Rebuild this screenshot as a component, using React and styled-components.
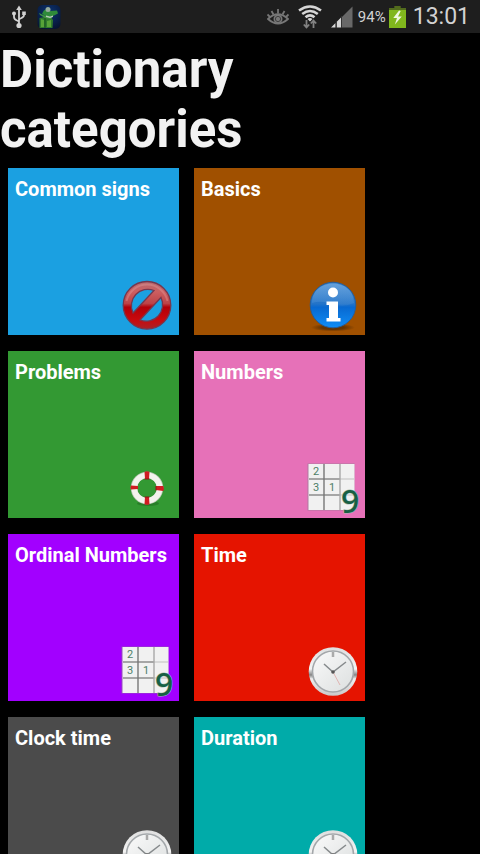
import React, { useId } from "react";
import styled, { createGlobalStyle } from "styled-components";

const categories = [
  { name: "Common signs", color: "#1ba0e1", icon: ForbiddenIcon },
  { name: "Basics", color: "#a05000", icon: InfoIcon },
  { name: "Problems", color: "#339933", icon: LifebuoyIcon },
  { name: "Numbers", color: "#e671b8", icon: NumbersIcon },
  { name: "Ordinal Numbers", color: "#a200ff", icon: NumbersIcon },
  { name: "Time", color: "#e51400", icon: ClockIcon },
  { name: "Clock time", color: "#4b4b4b", icon: ClockIcon },
  { name: "Duration", color: "#00aba9", icon: ClockIcon },
];

function App() {
  return (
    <Screen>
      <GlobalStyle />
      <StatusBar>
        <UsbIcon />
        <AppIcon />
        <Spacer />
        <EyeIcon />
        <WifiIcon />
        <SignalIcon />
        <Percent>94%</Percent>
        <BatteryIcon />
        <Clock>13:01</Clock>
      </StatusBar>
      <Main>
        <Heading>Dictionary categories</Heading>
        <Grid>
          {categories.map(({ name, color, icon: Icon }) => (
            <Tile key={name} type="button" $color={color}>
              <TileName>{name}</TileName>
              <TileIcon>
                <Icon />
              </TileIcon>
            </Tile>
          ))}
        </Grid>
      </Main>
    </Screen>
  );
}

export default App;

function UsbIcon() {
  return (
    <svg width="18" height="24" viewBox="-1 0 18 24" aria-hidden="true">
      <g fill="none" stroke="#d2d2d2" strokeWidth="1.8">
        <path d="M8 4v16M8 17.5C8 15 3 16 3 12V9M8 15c0-2 5-1.500 5-5V8" />
      </g>
      <g fill="#d2d2d2">
        <path d="M8 .5l2.800 4.500H5.200z" />
        <circle cx="3" cy="8.500" r="2" />
        <path d="M11.200 6.500h3.600v3.600h-3.600z" />
        <circle cx="8" cy="20.500" r="2.600" />
      </g>
    </svg>
  );
}

function AppIcon() {
  return (
    <svg width="24" height="26" viewBox="0 0 24 26" aria-hidden="true">
      <defs>
        <radialGradient id="app-bg" cx="50%" cy="30%" r="75%">
          <stop offset="0" stopColor="#0c3474" />
          <stop offset="1" stopColor="#071431" />
        </radialGradient>
      </defs>
      <rect x=".5" y="1" width="23" height="24" rx="5" fill="url(#app-bg)" />
      <path d="M6 8Q7 5 10 6l3 1 7-.5 1 3-5 2.500H9L5 10z" fill="#2f8a3a" />
      <path d="M2.500 14l5-1 7 1 1.500 2-.5 8h-13z" fill="#2f7a2d" />
      <path d="M2 9l4 2 4 1 5 1-1 2-6-1-5-3z" fill="#3f9440" />
      <path d="M8 14v10" fill="none" stroke="#194f20" />
      <path d="M4 15l3 1v7H4zM10 17l4-1v7h-4z" fill="#57a238" />
      <circle cx="11" cy="5.500" r="2.500" fill="#95ab9c" />
      <path d="M9 11.500l4 1 3-1v1.500l-3 1-4-1z" fill="#b4ccb3" />
    </svg>
  );
}

function EyeIcon() {
  return (
    <svg width="22" height="18" viewBox="0 0 22 18" aria-hidden="true">
      <g fill="none" stroke="#777" strokeWidth="1.800">
        <path d="M1 11Q11 1.500 21 11Q11 20 1 11z" />
        <circle cx="11" cy="11" r="3.600" />
        <path d="M11 5.500V1M6.500 6.500L4.500 3M15.500 6.500l2-3.500M3 9L.5 6.500M19 9l2.500-2.500" />
      </g>
      <circle cx="11" cy="11" r="2.200" fill="#777" />
    </svg>
  );
}

function WifiIcon() {
  return (
    <svg width="24" height="24" viewBox="0 0 24 24" aria-hidden="true">
      <g fill="none" stroke="#d6d6d6" strokeWidth="2.600">
        <path d="M1 5.500Q12-2.500 23 5.500" />
        <path d="M4.200 9Q12 3 19.800 9" />
        <path d="M7.500 12.300Q12 8.500 16.500 12.300" />
      </g>
      <path d="M9.500 14Q12 12 14.500 14L12 16.500z" fill="#d6d6d6" />
      <g fill="none" stroke="#828282" strokeWidth="1.800">
        <path d="M8.500 15v7M5.800 19.500l2.700 3 2.700-3" />
        <path d="M15.500 23v-7M12.800 18.500l2.700-3 2.700 3" />
      </g>
    </svg>
  );
}

function SignalIcon() {
  return (
    <svg width="22" height="22" viewBox="0 0 22 22" aria-hidden="true">
      <path d="M11 11L21.500.5v21H11z" fill="#686868" />
      <path d="M0 21.500L4.500 17v4.500zM5.500 16l4.500-4.500v10H5.500z" fill="#d6d6d6" />
      <path d="M5.300 15v7M10.500 10v12" stroke="#333" />
    </svg>
  );
}

function BatteryIcon() {
  return (
    <svg width="17" height="22" viewBox="0 0 16 22" preserveAspectRatio="none" aria-hidden="true">
      <path d="M5 0h6v2h5v20H0V2h5z" fill="#526b1d" />
      <path d="M0 4h16v18H0z" fill="#80b71d" />
      <path d="M9.500 4.500L4 12h3.500L5.500 18.500 12 10.500H8.500L11 5z" fill="#eef7df" />
    </svg>
  );
}

function ForbiddenIcon() {
  return (
    <svg viewBox="0 0 52 52" aria-hidden="true">
      <defs>
        <linearGradient id="forbid" x1="0" y1="0" x2="0" y2="1">
          <stop offset="0" stopColor="#b86b70" />
          <stop offset=".22" stopColor="#cc5e60" />
          <stop offset=".46" stopColor="#bd4448" />
          <stop offset=".54" stopColor="#b20009" />
          <stop offset=".8" stopColor="#c9090d" />
          <stop offset="1" stopColor="#a92328" />
        </linearGradient>
      </defs>
      <path
        fill="url(#forbid)"
        fillRule="evenodd"
        stroke="#75384f"
        strokeWidth="1.300"
        d="M25 1.500a23.800 23.800 0 1 0 0 47.600a23.800 23.800 0 1 0 0-47.600zM11 33A16.500 16.500 0 0 1 32 10.500zM39 17.500A16.500 16.500 0 0 1 18 40z"
      />
      <path
        d="M4.500 21A21 21 0 0 1 45.500 21"
        fill="none"
        stroke="#e49b9a"
        strokeOpacity=".4"
        strokeWidth="2"
      />
    </svg>
  );
}

function InfoIcon() {
  return (
    <svg viewBox="0 0 52 52" aria-hidden="true">
      <defs>
        <linearGradient id="info" x1="0" y1="0" x2="0" y2="1">
          <stop offset="0" stopColor="#347fca" />
          <stop offset=".47" stopColor="#2474c8" />
          <stop offset=".55" stopColor="#0869d1" />
          <stop offset="1" stopColor="#108df5" />
        </linearGradient>
        <linearGradient id="info-shine" x1="0" y1="0" x2="0" y2="1">
          <stop offset="0" stopColor="#8dbdeb" stopOpacity=".55" />
          <stop offset="1" stopColor="#8dbdeb" stopOpacity=".1" />
        </linearGradient>
        <radialGradient id="info-shadow">
          <stop offset=".5" stopColor="#4d2700" stopOpacity=".7" />
          <stop offset="1" stopColor="#4d2700" stopOpacity="0" />
        </radialGradient>
      </defs>
      <ellipse cx="25" cy="47.500" rx="22" ry="4" fill="url(#info-shadow)" />
      <circle cx="25" cy="25" r="22.800" fill="url(#info)" stroke="#285e98" />
      <path
        d="M4 23C4-3 46-3 46 23Q35 28 25 24Q14 20 4 23z"
        fill="url(#info-shine)"
      />
      <circle cx="25" cy="12.500" r="5" fill="#fff" />
      <path d="M18.500 21.500H30V38h2.500v3.500H18.500V38H21V25h-2.500z" fill="#fff" />
    </svg>
  );
}

function LifebuoyIcon() {
  return (
    <svg viewBox="0 0 52 52" aria-hidden="true">
      <ellipse cx="26" cy="40.500" rx="11" ry="2.500" fill="#1d651d" opacity=".5" />
      <circle cx="25" cy="25" r="13" fill="none" stroke="#b9c7b3" strokeWidth="6.500" />
      <circle cx="25" cy="25" r="12.700" fill="none" stroke="#f3f3ed" strokeWidth="5.500" />
      <g fill="#d01c22">
        <path d="M22.500 8.800q2.500-1 5 0l-.5 7.200h-4zM22.500 41.300q2.500 1 5 0L27 34h-4z" />
        <path d="M9 22.500q-1 2 0 4l7-.5v-3zM41.300 23q1 2.500 0 5L34 27v-4z" />
      </g>
      <path
        d="M22.500 34h5M22.500 16h5M34 23v4.500"
        stroke="#8b1717"
        strokeWidth="1"
      />
    </svg>
  );
}

function NumbersIcon() {
  return (
    <svg viewBox="0 0 52 52" aria-hidden="true">
      <rect x="-.5" y=".5" width="47" height="47" fill="#8d7f92" opacity=".6" />
      <path d="M.5 1h46v46H.5z" fill="#f1f1f1" />
      <g fill="none" strokeWidth="1.400">
        <path d="M1 16h31M1 32h31" stroke="#8d8d8d" />
        <path d="M32 16h14M32 32h14" stroke="#cfcfcf" />
        <path d="M16 1v46" stroke="#777" />
        <path d="M32 1v46" stroke="#a8a8a8" />
      </g>
      <Digit x="5" y="12">2</Digit>
      <Digit x="5" y="28">3</Digit>
      <Digit x="21" y="28">1</Digit>
      <BigDigit x="33" y="50">9</BigDigit>
    </svg>
  );
}

function ClockIcon() {
  const id = useId();

  return (
    <svg viewBox="0 0 52 52" aria-hidden="true">
      <defs>
        <linearGradient id={`${id}rim`} x1="0" y1="0" x2="0" y2="1">
          <stop offset="0" stopColor="#dedede" />
          <stop offset=".45" stopColor="#f4f4f4" />
          <stop offset=".57" stopColor="#858585" />
          <stop offset=".65" stopColor="#eee" />
          <stop offset="1" stopColor="#c9c9c9" />
        </linearGradient>
        <linearGradient id={`${id}face`} x1="0" y1="0" x2="1" y2="1">
          <stop offset="0" stopColor="#fafafa" />
          <stop offset="1" stopColor="#dcdfdf" />
        </linearGradient>
      </defs>
      <circle cx="25" cy="25.500" r="24.300" fill={`url(#${id}rim)`} />
      <circle
        cx="25"
        cy="25.500"
        r="20.500"
        fill={`url(#${id}face)`}
        stroke="#a3a7aa"
        strokeWidth="1.600"
      />
      <path d="M25 6v5" stroke="#aaa" strokeWidth="2.500" />
      <path d="M25 26l7 13" stroke="#e0b5b2" strokeWidth="1" />
      <path
        d="M16 18l9 8 13-10"
        fill="none"
        stroke="#868a8c"
        strokeWidth="1.500"
      />
      <circle cx="25" cy="26" r="1.800" fill="#555" />
    </svg>
  );
}

const GlobalStyle = createGlobalStyle`
  * {
    box-sizing: border-box;
  }

  body {
    margin: 0;
    background: #000;
    font-family: Roboto, "Liberation Sans", sans-serif;
  }
`;

const Screen = styled.div`
  display: flex;
  flex-direction: column;
  height: 100vh;
  background: #000;
`;

const StatusBar = styled.header`
  display: flex;
  align-items: center;
  flex-shrink: 0;
  height: 33px;
  padding: 0 10px;
  background: #1e1e1e;
  color: #d2d2d2;

  svg {
    flex-shrink: 0;
  }

  svg + svg {
    margin-left: 9px;
  }
`;

const Spacer = styled.div`
  flex: 1;
`;

const Percent = styled.span`
  margin: 0 3px 0 5px;
  font-size: 15px;
`;

const Clock = styled.time`
  margin-left: 7px;
  font-size: 23px;
`;

const Main = styled.main`
  flex: 1;
  min-height: 0;
  overflow-y: auto;
  scrollbar-width: none;
`;

const Heading = styled.h1`
  max-width: 400px;
  margin: 0;
  padding: 7px 0 8px;
  color: #f2f2f2;
  font-size: 51px;
  font-weight: 700;
  line-height: 60px;
`;

const Grid = styled.div`
  display: grid;
  grid-template-columns: repeat(2, 171px);
  gap: 16px 15px;
  padding: 0 8px 16px;
`;

const Tile = styled.button`
  display: flex;
  flex-direction: column;
  justify-content: space-between;
  height: 167px;
  padding: 9px 5px 3px 7px;
  border: none;
  background: ${(props) => props.$color};
  color: #fff;
  font-family: inherit;
  text-align: left;
  cursor: pointer;
`;

const TileName = styled.span`
  font-size: 20px;
  font-weight: 700;
  line-height: 24px;
  white-space: nowrap;
`;

const TileIcon = styled.span`
  align-self: flex-end;
  width: 52px;
  height: 52px;

  svg {
    display: block;
    overflow: visible;
  }
`;

const Digit = styled.text`
  fill: #4d7f68;
  font-family: Roboto, sans-serif;
  font-size: 11px;
`;

const BigDigit = styled.text`
  fill: #176044;
  stroke: #a9c0b5;
  stroke-width: 1px;
  paint-order: stroke;
  font-family: "Noto Sans", sans-serif;
  font-size: 32px;
  font-weight: 500;
`;
